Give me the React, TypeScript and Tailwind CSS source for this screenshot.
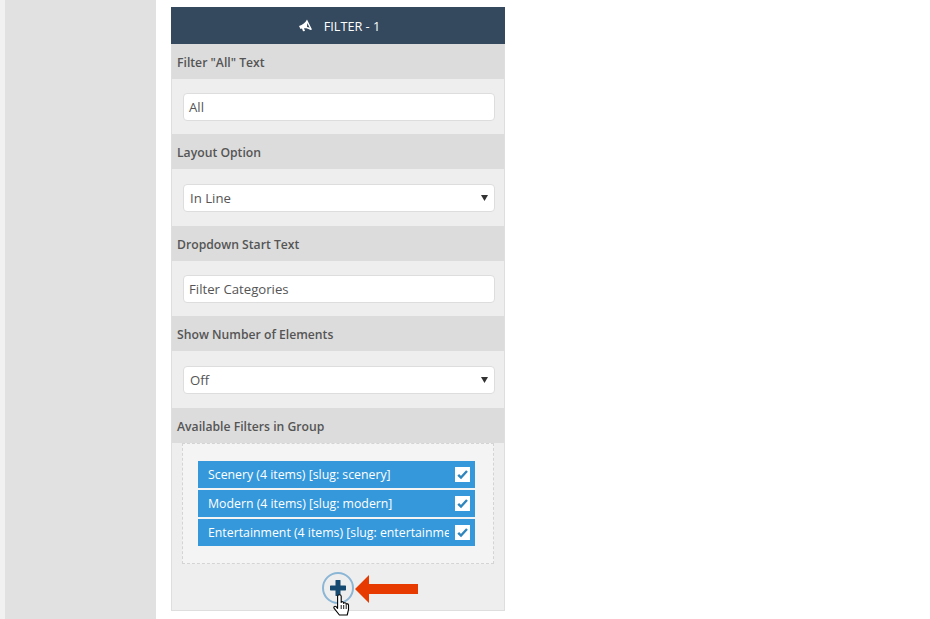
import React from "react";

const font = { fontFamily: '"Open Sans", sans-serif' };

const SectionHead = ({ label }: { label: string }) => (
  <div className="flex h-[35px] items-center bg-[#dcdcdc] pl-[5px] pt-[3px] text-[12.2px] font-semibold text-[#555555]">
    {label}
  </div>
);

const TextField = ({ value }: { value: string }) => (
  <div className="flex h-[28px] items-center rounded-[4px] border border-[#dddddd] bg-white px-[5px] pt-[2px] text-[13.2px] text-[#555555]">
    {value}
  </div>
);

const SelectField = ({ value }: { value: string }) => (
  <div className="flex h-[28px] items-center justify-between rounded-[4px] border border-[#dddddd] bg-white px-[6px] text-[13.2px] text-[#555555]">
    <span className="pt-[2px]">{value}</span>
    <svg width="7" height="6" viewBox="0 0 7 6">
      <path d="M0 0h7L3.5 6z" fill="#333333" />
    </svg>
  </div>
);

const FilterRow = ({ label }: { label: string }) => (
  <div className="flex h-[27px] items-center justify-between bg-[#3498db] pl-[10px] pr-[5px] text-[12.3px] text-white">
    <span className="w-[241px] overflow-hidden whitespace-nowrap pt-[2px]">{label}</span>
    <div className="flex h-[15px] w-[15px] items-center justify-center bg-white">
      <svg width="13" height="13" viewBox="0 0 13 13">
        <path d="M2.2 6.8l2.8 2.8L11 3" fill="none" stroke="#2f86bd" strokeWidth="2.4" />
      </svg>
    </div>
  </div>
);

const Megaphone = () => (
  <svg width="13" height="13" viewBox="0 0 13 13" fill="white">
    <path d="M8 .5l5 10-1.5.5C9 9.5 7 9 5 9.3L6 12l-2 .3-1-2.7-1.5.4L0 7c3.5-1 6.5-3.5 8-6.5z" />
    <path d="M8.3 4l2.3 4.8C9.8 8.4 9 8.2 8 8z" fill="#34495e" />
  </svg>
);

const HandCursor = () => (
  <svg width="18" height="22" viewBox="0 0 18 22">
    <path
      d="M4.6 2.2c0-2 3.6-2 3.6 0v6.2c.3-1 2.3-1 2.5.2v.8c.3-1 2.3-.9 2.5.3v.7c.4-.9 2.3-.7 2.3.6v4.6L14.2 21H6.4L1.2 14.4c-1-1.5.6-2.8 1.9-1.7l1.5 1.6z"
      fill="white"
      stroke="black"
      strokeWidth="1.1"
      strokeLinejoin="round"
    />
    <path d="M8.2 11v4M10.7 11v4M13.2 11v4" stroke="black" strokeWidth="0.9" />
  </svg>
);

export default function App() {
  return (
    <div className="flex h-[619px] w-[930px] overflow-hidden bg-white" style={font}>
      <div className="w-[5px] bg-[#f1f1f1]" />
      <div className="w-[151px] bg-[#e1e1e1]" />

      <div className="ml-[15px] mt-[7px] h-[604px] w-[334px]">
        <div className="flex h-[37px] items-center justify-center gap-[12px] bg-[#34495e] pl-[3px] text-[12.7px] font-normal text-white">
          <Megaphone />
          <span className="pt-[2px]">FILTER - 1</span>
        </div>

        <div className="h-[567px] border-x border-b border-[#dedede] bg-[#eeeeee]">
          <SectionHead label={'Filter "All" Text'} />
          <div className="h-[55px] pl-[11px] pr-[9px] pt-[14px]">
            <TextField value="All" />
          </div>

          <SectionHead label="Layout Option" />
          <div className="h-[57px] pl-[11px] pr-[9px] pt-[15px]">
            <SelectField value="In Line" />
          </div>

          <SectionHead label="Dropdown Start Text" />
          <div className="h-[55px] pl-[11px] pr-[9px] pt-[14px]">
            <TextField value="Filter Categories" />
          </div>

          <SectionHead label="Show Number of Elements" />
          <div className="h-[57px] pl-[11px] pr-[9px] pt-[15px]">
            <SelectField value="Off" />
          </div>

          <SectionHead label="Available Filters in Group" />
          <div className="px-[10px]">
            <div className="flex h-[121px] flex-col gap-[2px] border border-dashed border-[#d4d4d4] bg-[#f4f4f4] pl-[15px] pr-[18px] pt-[17px]">
              <FilterRow label="Scenery (4 items) [slug: scenery]" />
              <FilterRow label="Modern (4 items) [slug: modern]" />
              <FilterRow label="Entertainment (4 items) [slug: entertainment]" />
            </div>

            <div className="relative mx-auto mt-[8px] flex h-[32px] w-[32px] items-center justify-center rounded-full border-2 border-[#8cb6d6]">
              <svg width="16" height="16" viewBox="0 0 16 16">
                <path d="M8 1v14M1 8h14" stroke="#174a70" strokeWidth="5" strokeLinecap="round" />
              </svg>
              <div className="absolute left-[9px] top-[20px]">
                <HandCursor />
              </div>
              <div className="absolute left-[31px] top-[1px]">
                <svg width="63" height="28" viewBox="0 0 63 28">
                  <path d="M0 14L14 0v9h49v10H14v9z" fill="#e63a00" />
                </svg>
              </div>
            </div>
          </div>
        </div>
      </div>
    </div>
  );
}
